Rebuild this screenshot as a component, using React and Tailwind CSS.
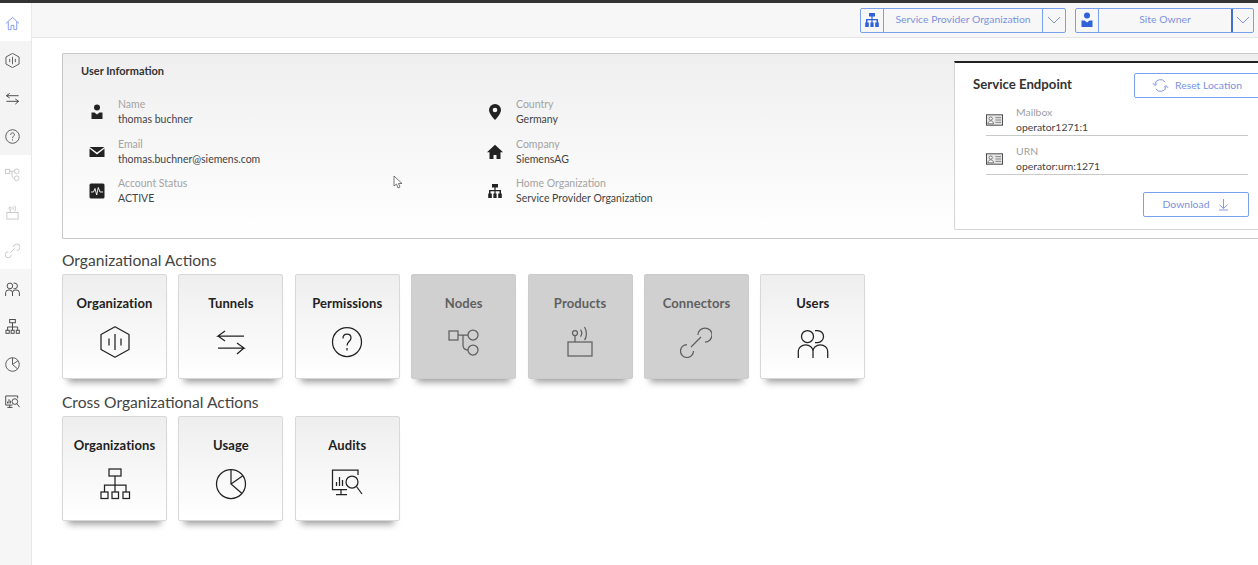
import { useState } from 'react';

const Line = ({ className, sw = 1.25, children }) => (
  <svg viewBox="0 0 32 32" fill="none" stroke="currentColor" strokeWidth={sw} className={className}>
    {children}
  </svg>
);

const HomeIcon = (p) => (
  <Line {...p}>
    <path d="M2 16 16 3l14 13M7 12v17h6v-9h6v9h6V12" />
  </Line>
);
const HexIcon = (p) => (
  <Line {...p}>
    <path d="M16 .8 30 8.500v15L16 31.200 2 23.500v-15z" strokeLinejoin="round" />
    <path d="M16 8v16M10 12.500v7M22 12.500v7" />
  </Line>
);
const ArrowsIcon = (p) => (
  <Line {...p}>
    <path d="M29 10H3l7-5M3 10l7 5M3 22h26l-7-5M29 22l-7 6" />
  </Line>
);
const HelpIcon = (p) => (
  <Line {...p}>
    <circle cx="16" cy="16" r="14.500" />
    <path d="M12 12.500c0-2.800 1.800-4.300 4-4.300s4 1.500 4 3.800c0 3.500-4 3.500-4 7.500M16 22v2.500" />
  </Line>
);
const NodesIcon = (p) => (
  <Line {...p}>
    <rect x="1" y="5" width="9" height="9" />
    <circle cx="25" cy="9" r="5" />
    <circle cx="25" cy="24" r="5" />
    <path d="M10 9h10M15 9v10c0 3 2 5 5 5" />
  </Line>
);
const ProductIcon = (p) => (
  <Line {...p}>
    <rect x="4" y="16" width="24" height="14" />
    <circle cx="11" cy="7" r="2.500" />
    <path d="M11 9.500V16M16.500 3.500c1.500 2 1.500 5 0 7M20.500 1c2.500 3.500 2.500 10 0 13" />
  </Line>
);
const LinkIcon = (p) => (
  <Line {...p}>
    <path d="M21 11 11 21" />
    <path d="M18 9a7 7 0 1 1 7 7M7 18.500A6.500 6.500 0 1 0 13.500 25" />
  </Line>
);
const UsersIcon = (p) => (
  <Line {...p}>
    <circle cx="10.500" cy="10.500" r="6" />
    <path d="M18 4.500h2.500a6 6 0 0 1 0 12H18" />
    <path d="M1.300 32v-7a7.300 6 0 0 1 14.700 0v7M16 25a7.300 6 0 0 1 14.700 0v7" />
  </Line>
);
const TreeIcon = (p) => (
  <Line {...p}>
    <rect x="10" y="1" width="12" height="7" />
    <rect x="2" y="24" width="7" height="6.500" />
    <rect x="13" y="24" width="6.500" height="6.500" />
    <rect x="24" y="24" width="6.500" height="6.500" />
    <path d="M16 8v16M5.500 24v-7h21.500v7" />
  </Line>
);
const PieIcon = (p) => (
  <Line {...p}>
    <circle cx="16" cy="16" r="14.500" />
    <path d="M16 1.500V16l11 9.500M16 16l11.500-8" />
  </Line>
);
const AuditIcon = (p) => (
  <Line {...p}>
    <path d="M27 7V2H1.500v19.500H16M10 21.500V26M5 26.500h11" />
    <path d="M5.500 18v-4M8.500 18V9M11.500 18v-6" />
    <circle cx="21" cy="14" r="6" />
    <path d="M25.500 18.500 31 26" />
  </Line>
);

const UserSolid = ({ className }) => (
  <svg viewBox="0 0 16 16" fill="currentColor" className={className}>
    <circle cx="8" cy="3.500" r="3" />
    <path d="M2.500 8.500h3L8 10.500l2.500-2h3V15h-11z" />
  </svg>
);
const MailSolid = ({ className }) => (
  <svg viewBox="0 0 16 16" fill="currentColor" className={className}>
    <path d="M.5 3h15L8 8.500zM.5 4.500 8 10.500l7.500-6V13H.5z" />
  </svg>
);
const StatusSolid = ({ className }) => (
  <svg viewBox="0 0 16 16" className={className}>
    <rect x="0.500" y="0.500" width="15" height="15" rx="1.500" fill="currentColor" />
    <path d="M2 9h2.500L6 5.500 7.700 12l1.600-7.500L11 9h3" fill="none" stroke="#fff" strokeWidth="0.900" />
  </svg>
);
const PinSolid = ({ className }) => (
  <svg viewBox="0 0 16 16" className={className}>
    <path d="M8 0a6 6 0 0 0-6 6c0 4 6 10 6 10s6-6 6-10a6 6 0 0 0-6-6z" fill="currentColor" />
    <circle cx="8" cy="6" r="2.300" fill="#f7f7f7" />
  </svg>
);
const HouseSolid = ({ className }) => (
  <svg viewBox="0 0 16 16" fill="currentColor" className={className}>
    <path d="M8 .8 0 8.200h2.500V15h4v-4h3v4h4V8.200H16z" />
  </svg>
);
const TreeSolid = ({ className }) => (
  <svg viewBox="0 0 16 16" fill="currentColor" className={className}>
    <path d="M5 1h6v3.500H8.600V7H14v3.500h.8V15h-3.600v-4.500h1.300V8.200H8.600v2.300h1V15H6.400v-4.500h1V8.200H3.500v2.300h1.300V15H1.200v-4.500H2V7h5.400V4.500H5z" />
  </svg>
);
const IdCard = ({ className }) => (
  <svg viewBox="0 0 18 12" fill="none" className={className}>
    <rect x="0.500" y="0.500" width="17" height="11" fill="#e6e6e6" stroke="#444" />
    <circle cx="5" cy="4.500" r="1.700" fill="#fff" stroke="#555" strokeWidth="0.800" />
    <path d="M2 10c.3-2 1.500-3 3-3s2.700 1 3 3z" fill="#fff" stroke="#555" strokeWidth="0.800" />
    <path d="M10 3.500h6M10 6h6M10 8.500h6" stroke="#666" strokeWidth="0.800" />
  </svg>
);

const sidebarIcons = [
  { Icon: HomeIcon, tone: 'text-[#7f97ee]', bg: 'bg-white pt-[2px]' },
  { Icon: HexIcon, tone: 'text-[#555]', bg: 'bg-[#f4f4f4]' },
  { Icon: ArrowsIcon, tone: 'text-[#444]', bg: 'bg-[#f4f4f4]' },
  { Icon: HelpIcon, tone: 'text-[#555]', bg: 'bg-[#f4f4f4]' },
  { Icon: NodesIcon, tone: 'text-[#c8c8c8]', bg: 'bg-white' },
  { Icon: ProductIcon, tone: 'text-[#c8c8c8]', bg: 'bg-white' },
  { Icon: LinkIcon, tone: 'text-[#c8c8c8]', bg: 'bg-white' },
  { Icon: UsersIcon, tone: 'text-[#444]', bg: 'bg-[#f6f6f6]' },
  { Icon: TreeIcon, tone: 'text-[#444]', bg: 'bg-[#f6f6f6]' },
  { Icon: PieIcon, tone: 'text-[#555]', bg: 'bg-[#f6f6f6]' },
  { Icon: AuditIcon, tone: 'text-[#444]', bg: 'bg-[#f6f6f6]' },
];

const userInfo = [
  { Icon: UserSolid, label: 'Name', value: 'thomas buchner' },
  { Icon: PinSolid, label: 'Country', value: 'Germany' },
  { Icon: MailSolid, label: 'Email', value: 'thomas.buchner@siemens.com' },
  { Icon: HouseSolid, label: 'Company', value: 'SiemensAG' },
  { Icon: StatusSolid, label: 'Account Status', value: 'ACTIVE' },
  { Icon: TreeSolid, label: 'Home Organization', value: 'Service Provider Organization' },
];

const orgActions = [
  { name: 'Organization', Icon: HexIcon },
  { name: 'Tunnels', Icon: ArrowsIcon },
  { name: 'Permissions', Icon: HelpIcon },
  { name: 'Nodes', Icon: NodesIcon, disabled: true },
  { name: 'Products', Icon: ProductIcon, disabled: true },
  { name: 'Connectors', Icon: LinkIcon, disabled: true },
  { name: 'Users', Icon: UsersIcon },
];

const crossActions = [
  { name: 'Organizations', Icon: TreeIcon },
  { name: 'Usage', Icon: PieIcon },
  { name: 'Audits', Icon: AuditIcon },
];

function Chevron() {
  return (
    <svg viewBox="0 0 14 8" fill="none" stroke="currentColor" className="w-[14px] h-2">
      <path d="M1 1l6 6 6-6" />
    </svg>
  );
}

function Selector({ Icon, label, width, labelWidth, divider }) {
  return (
    <div className={`flex h-[24.500px] ${width} border border-[#79a0ec] rounded-[2px] text-[#7b92e0]`}>
      <div className="w-[23px] flex items-center justify-center border-r border-[#79a0ec] text-[#2f62d8]">
        <Icon className="w-4 h-4" />
      </div>
      <div className={`${labelWidth} flex items-center justify-center text-[10.400px] pb-[1px] ${divider}`}>{label}</div>
      <div className="flex-1 flex items-center justify-center">
        <Chevron />
      </div>
    </div>
  );
}

function Tile({ name, Icon, disabled }) {
  return (
    <div
      className={`w-[105px] h-[105px] rounded-[2px] flex flex-col items-center pt-[20px] shadow-[0_9px_7px_-6px_rgba(0,0,0,0.4)] ${
        disabled
          ? 'bg-[#d0d0d0] text-[#5f5f5f] border border-[#cccccc]'
          : 'bg-gradient-to-b from-[#eeeeee] to-white text-[#222] border border-[#d8d8d8]'
      }`}
    >
      <span className="text-[13px] font-bold leading-[17px] tracking-[0.1px]">{name}</span>
      <Icon className="w-[32px] h-[32px] mt-[14px]" />
    </div>
  );
}

function EndpointRow({ label, value }) {
  return (
    <div className="flex items-center h-[39.500px] pt-[9px] ml-[31px] mr-[10px] border-b border-[#c9c9c9]">
      <IdCard className="w-[17px] h-[12px]" />
      <div className="ml-[13px] text-[10.400px] leading-[15px]">
        <div className="text-[#a0a0a0]">{label}</div>
        <div className="text-[#444]">{value}</div>
      </div>
    </div>
  );
}

export default function App() {
  const [actions] = useState(orgActions);

  return (
    <div className="relative flex flex-col w-[1258px] h-[565px] overflow-hidden bg-white font-['Lato',sans-serif]">
      <div className="h-[3px] bg-[#333]" />
      <div className="flex flex-1">
        <aside className="w-[32px] border-r border-[#e8e8e8] flex flex-col bg-[#f6f6f6]">
          {sidebarIcons.map(({ Icon, tone, bg }, i) => (
            <div key={i} className={`h-[38px] ${bg} flex items-center justify-center pr-[7px]`}>
              <Icon sw={2} className={`w-[15px] h-[15px] ${tone}`} />
            </div>
          ))}
        </aside>

        <main className="flex-1">
          <header className="h-[35px] bg-[#f7f7f7] border-b border-[#e6e6e6] flex justify-end items-start pt-[5px] pr-[4px] gap-[9px]">
            <Selector Icon={TreeSolid} label="Service Provider Organization" width="w-[206px]" labelWidth="w-[159px]" divider="border-r border-[#79a0ec]" />
            <Selector Icon={UserSolid} label="Site Owner" width="w-[179px]" labelWidth="w-[134px]" divider="border-r-2 border-[#3f70d0]" />
          </header>

          <div className="pl-[30px] pt-[15px]">
            <section className="flex justify-between h-[186px] border border-[#c8c8c8] border-r-0 rounded-l-[2px] bg-gradient-to-b from-[#efefef] to-white">
              <div className="pl-[18px] pt-[10px]">
                <h2 className="text-[11px] font-bold text-[#333] leading-[14px]">User Information</h2>
                <div className="grid grid-cols-[398px_300px] grid-rows-[39.500px_39.500px_39.500px] mt-[14.500px] ml-[8px]">
                  {userInfo.map(({ Icon, label, value }) => (
                    <div key={label} className="flex items-center">
                      <Icon className="w-[16px] h-[16px] text-[#222] shrink-0" />
                      <div className="ml-[13px] text-[10.500px] leading-[15px]">
                        <div className="text-[#a3a3a3]">{label}</div>
                        <div className="text-[#444]">{value}</div>
                      </div>
                    </div>
                  ))}
                </div>
              </div>

              <div className="w-[304px] h-[169px] mt-[7px] bg-white border-l border-b border-[#d4d4d4] border-t-2 border-t-[#222] overflow-hidden rounded-bl-[2px]">
                <div className="flex justify-between items-start pt-[10px] pl-[18px]">
                  <h3 className="text-[13.200px] font-bold text-[#333] pt-[2px]">Service Endpoint</h3>
                  <button className="w-[130px] -mr-[6px] h-[25px] flex items-center pl-[17px] gap-[6px] text-[10.400px] text-[#7b92e0] border border-[#79a0ec] rounded-[2px]">
                    <svg viewBox="0 0 18 18" fill="none" stroke="currentColor" className="w-[17px] h-[17px]">
                      <path d="M3 8a6 6 0 0 1 11-2.500M15 10a6 6 0 0 1-11 2.500M1 6.500 3 9l2.500-2M12.500 11l2.500-2 2 2.500" />
                    </svg>
                    Reset Location
                  </button>
                </div>
                <div className="-mt-[2px]">
                  <EndpointRow label="Mailbox" value="operator1271:1" />
                  <EndpointRow label="URN" value="operator:urn:1271" />
                </div>
                <div className="flex justify-end pr-[9px] pt-[17px]">
                  <button className="w-[106px] h-[25px] flex items-center justify-center gap-[9px] text-[10.400px] text-[#7b92e0] border border-[#79a0ec] rounded-[2px]">
                    Download
                    <svg viewBox="0 0 12 14" fill="none" stroke="currentColor" className="w-[11px] h-[13px]">
                      <path d="M6 1v10M1.500 7 6 11.500 10.500 7M1 13h10" />
                    </svg>
                  </button>
                </div>
              </div>
            </section>

            <h2 className="text-[15.600px] text-[#444] leading-[22px] mt-[9.500px] mb-[3.500px]">Organizational Actions</h2>
            <div className="flex gap-[11.400px]">
              {actions.map((a) => (
                <Tile key={a.name} {...a} />
              ))}
            </div>

            <h2 className="text-[15.600px] text-[#444] leading-[22px] mt-[12px] mb-[3px]">Cross Organizational Actions</h2>
            <div className="flex gap-[11.400px]">
              {crossActions.map((a) => (
                <Tile key={a.name} {...a} />
              ))}
            </div>
          </div>
        </main>
      </div>

      {/* mouse pointer captured in the shot */}
      <svg viewBox="0 0 10 14" className="absolute left-[393px] top-[175px] w-[10px] h-[14px]" fill="#fff" stroke="#555" strokeWidth="0.800">
        <path d="M1 1v10l2.500-2 1.500 4 2-1-1.500-3.500H9z" />
      </svg>
    </div>
  );
}
